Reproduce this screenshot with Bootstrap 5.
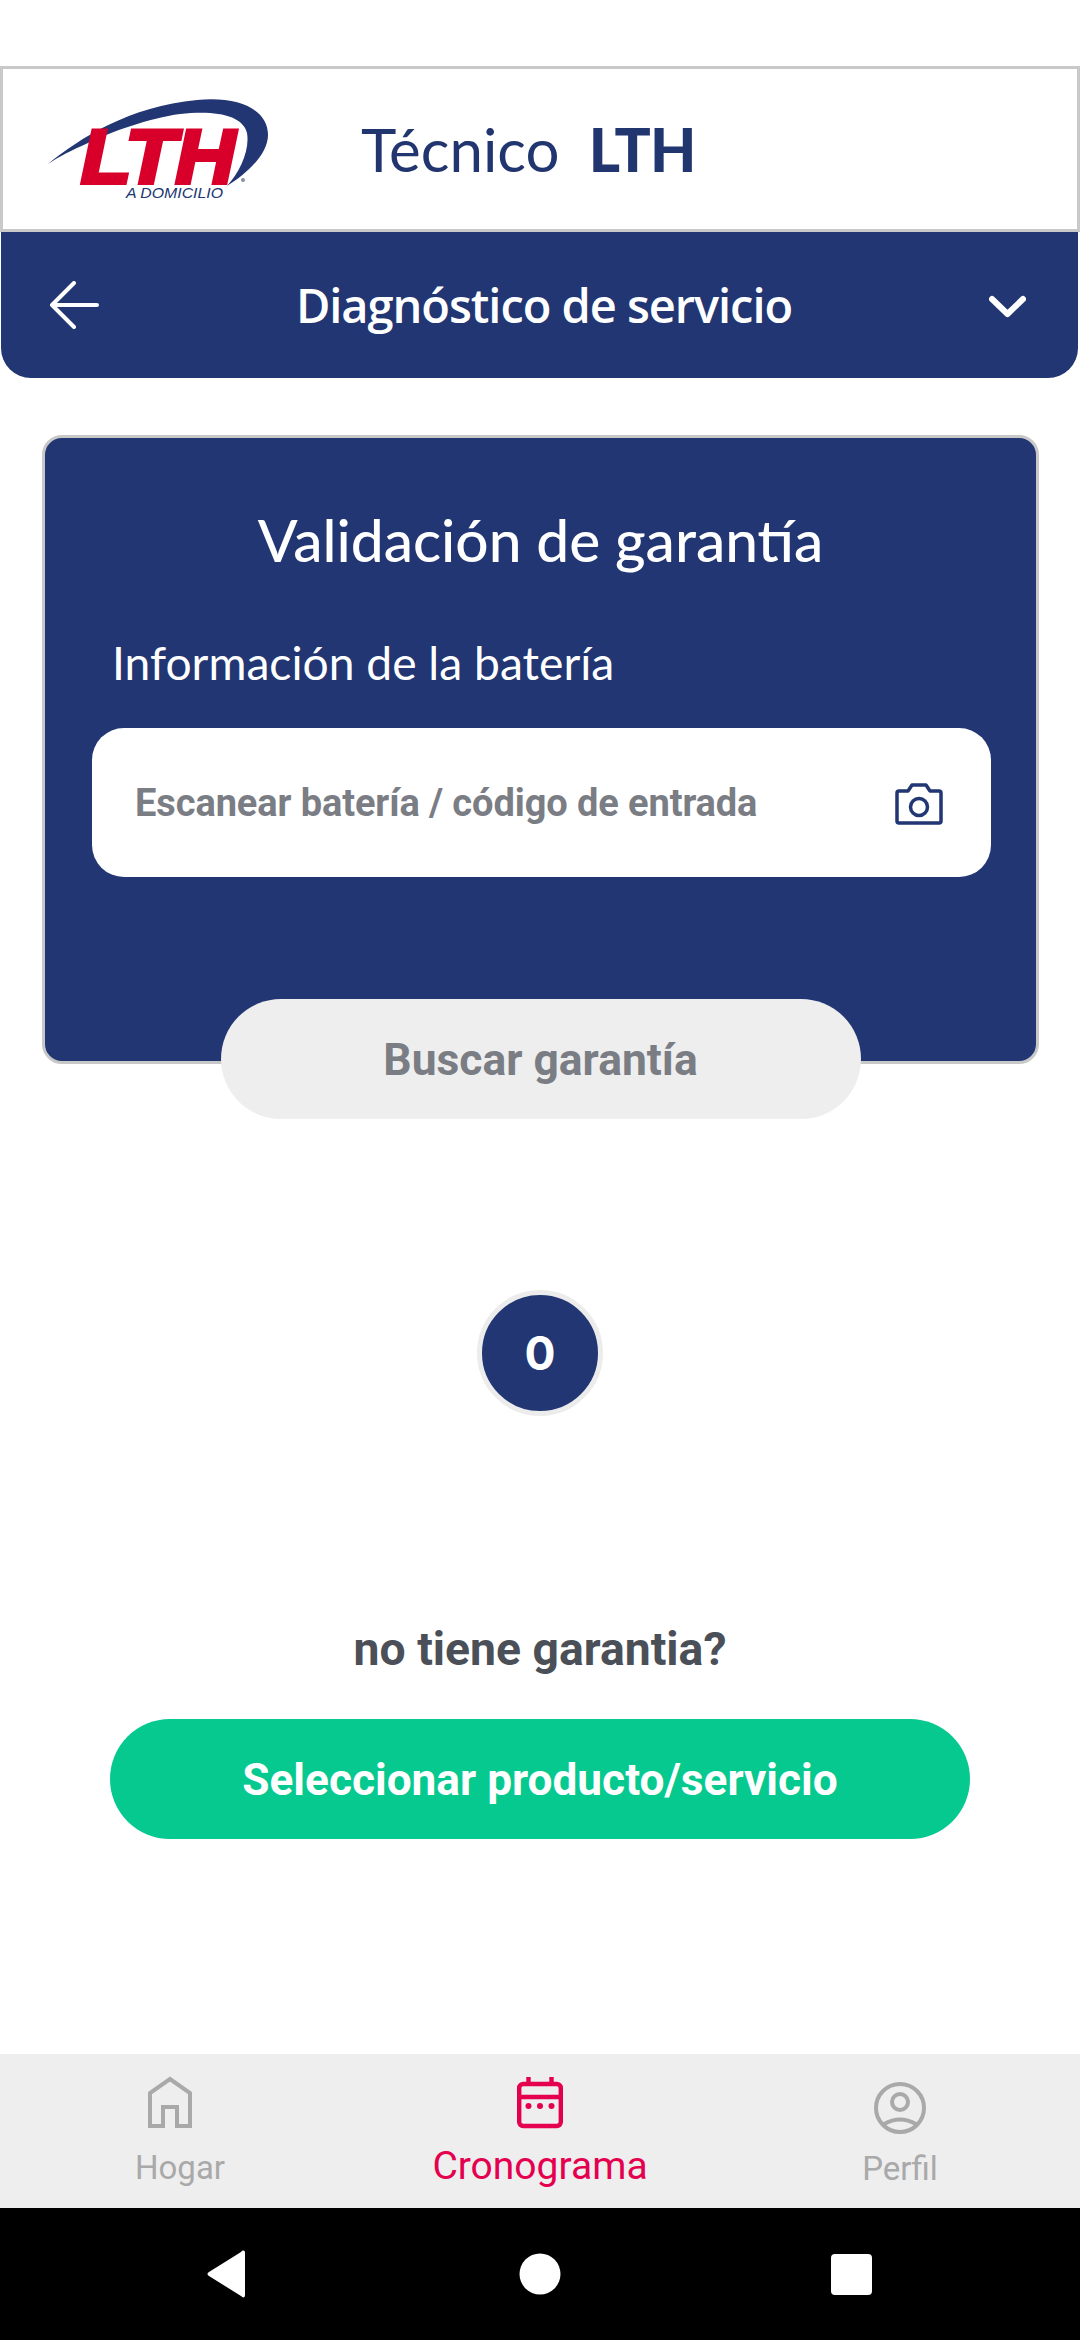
<!DOCTYPE html>
<html lang="es">
<head>
<meta charset="utf-8">
<title>Técnico LTH</title>
<link href="https://cdn.jsdelivr.net/npm/bootstrap@5.3.0/dist/css/bootstrap.min.css" rel="stylesheet">
<style>
html, body { margin: 0; background: #fff; }
.screen { width: 1080px; height: 2340px; font-family: Roboto, "Liberation Sans", sans-serif; }
.status-gap { height: 66px; }
.brand-bar { height: 166px; border: 3px solid #c9c9c9; background: #fff; padding: 0 0 0 37px; }
.brand-logo { width: 240px; height: 115px; display: block; margin-top: -3px; }
.brand-name { margin-left: 81px; font-family: "Lato", sans-serif; font-size: 60px; line-height: 1; color: #21356f; word-spacing: 6px; }
.brand-name b { font-weight: 900; margin-left: 8px; letter-spacing: -.5px; }
.title-bar { height: 146px; background: #213672; border-radius: 0 0 30px 30px; color: #fff; margin: 0 2px 0 1px; padding: 0 48px; }
.title-text { font-family: "Open Sans", sans-serif; font-weight: 600; font-size: 47px; letter-spacing: -1.05px; }
.chevron-icon { margin-top: 3px; }
.panel { margin: 57px 41px 0 42px; height: 629px; background: #213672; border: 3px solid #c8c8c8; border-radius: 20px; color: #fff; }
.panel-title { font-family: "Lato", sans-serif; font-size: 58.6px; font-weight: 500; line-height: 70px; margin: 66px 0 0; text-align: center; }
.panel-label { font-family: "Lato", sans-serif; font-size: 46.2px; font-weight: 400; line-height: 56px; margin: 60px 0 0 67px; }
.scan-box { margin: 38px 45px 0 47px; height: 149px; background: #fff; border-radius: 32px; padding: 2px 47px 0 43px; }
.scan-text { font-size: 38px; font-weight: 700; color: #7a7d84; letter-spacing: -.1px; }
.btn.search-btn { display: block; width: 640px; height: 120px; margin: 122px auto 0; background: #eeeeee; border: 0; border-radius: 60px; color: #7a7d84; font-size: 44.4px; font-weight: 700; padding: 3px 0 0; }
.count-dot { width: 126px; height: 126px; margin: 226px auto 0; background: #213672; border: 5px solid #ececec; border-radius: 50%; color: #fff; font-family: "Inter", sans-serif; font-size: 46px; font-weight: 700; }
.no-warranty { margin: 205px 0 0; text-align: center; font-size: 46.3px; font-weight: 700; color: #4b4f58; line-height: 56px; }
.btn.pick-btn { display: block; width: 860px; height: 120px; margin: 42px auto 0; background: #05c98f; border: 0; border-radius: 60px; color: #fff; font-size: 44.2px; font-weight: 700; padding: 2px 0 0; }
.tab-bar { height: 154px; background: #eeeeee; }
.tab-item { width: 360px; height: 154px; color: #a9a9a9; font-size: 33px; line-height: 40px; text-align: center; text-decoration: none; }
.tab-item svg { display: block; margin: 0 auto; }
.tab-item.active { color: #e4004f; font-size: 39px; }
.home-icon { margin: 22px auto 0 !important; transform: translateX(-10px); }
.cal-icon { margin-top: 23px !important; }
.user-icon { margin-top: 28px !important; }
.tab-label { margin-top: 20px; }
.cal-label { margin-top: 16px; }
.user-label { margin-top: 15px; }
.sys-nav { height: 132px; background: #000; }
</style>
</head>
<body>
<div class="screen d-flex flex-column overflow-hidden">
  <div class="status-gap"></div>

  <header class="brand-bar d-flex align-items-center">
    <svg class="brand-logo" viewBox="40 90 240 115" aria-label="LTH">
      <path fill="#213672" d="M48 164C80 138 130 106 197 100C240 96 268 110 268 135C268 155 245 175 227 186C240 172 250 150 247 133C243 115 215 110 180 114C150 118 110 132 88 143C72 150 58 157 48 164Z"/>
      <text x="81" y="183" font-family="Liberation Sans" font-weight="700" font-style="italic" font-size="76" fill="#d8002b" stroke="#d8002b" stroke-width="4" textLength="154" lengthAdjust="spacingAndGlyphs">LTH</text>
      <text x="126" y="198" font-family="Liberation Sans" font-style="italic" font-size="14" fill="#213672" textLength="97" lengthAdjust="spacingAndGlyphs">A DOMICILIO</text>
      <circle cx="243" cy="180" r="2" fill="#8b8fa0"/>
    </svg>
    <div class="brand-name">Técnico <b>LTH</b></div>
  </header>

  <div class="title-bar d-flex align-items-center justify-content-between">
    <svg width="50" height="48" viewBox="0 0 50 48" fill="none" stroke="#fff" stroke-width="4" stroke-linecap="round" stroke-linejoin="round"><path d="M25 2L3 24L25 46M3 24H48"/></svg>
    <div class="title-text">Diagnóstico de servicio</div>
    <svg class="me-1 chevron-icon" width="37" height="24" viewBox="0 0 37 24" fill="none" stroke="#fff" stroke-width="6" stroke-linecap="round" stroke-linejoin="round"><path d="M3 4L18.5 19L34 4"/></svg>
  </div>

  <main class="flex-grow-1">
    <section class="panel">
      <h2 class="panel-title">Validación de garantía</h2>
      <div class="panel-label">Información de la batería</div>
      <div class="scan-box d-flex align-items-center justify-content-between">
        <span class="scan-text">Escanear batería / código de entrada</span>
        <svg width="50" height="44" viewBox="0 0 50 44" fill="none" stroke="#213672" stroke-width="3.5" stroke-linejoin="round"><path d="M5 9H14L18 3H32L36 9H45Q47 9 47 11V39Q47 41 45 41H5Q3 41 3 39V11Q3 9 5 9Z"/><circle cx="25" cy="25" r="8.5"/></svg>
      </div>
      <button type="button" class="btn search-btn">Buscar garantía</button>
    </section>

    <div class="count-dot d-flex align-items-center justify-content-center">0</div>
    <p class="no-warranty">no tiene garantia?</p>
    <button type="button" class="btn pick-btn">Seleccionar producto/servicio</button>
  </main>

  <nav class="tab-bar d-flex">
    <a class="tab-item" href="#">
      <svg class="home-icon" width="48" height="52" viewBox="0 0 48 52" fill="none" stroke="#a9a9a9" stroke-width="4"><path d="M4 50V17L24 3L44 17V50H31V31H17V50Z"/></svg>
      <div class="tab-label">Hogar</div>
    </a>
    <a class="tab-item active" href="#">
      <svg class="cal-icon" width="46" height="53" viewBox="0 0 46 53" fill="none" stroke="#e4004f" stroke-width="4.4"><rect x="2.2" y="7" width="41.6" height="42" rx="4"/><path d="M2 20H44M11.5 0V7M34.5 0V7"/><g fill="#e4004f" stroke="none"><circle cx="11.5" cy="29" r="3"/><circle cx="23" cy="29" r="3"/><circle cx="34.5" cy="29" r="3"/></g></svg>
      <div class="cal-label">Cronograma</div>
    </a>
    <a class="tab-item" href="#">
      <svg class="user-icon" width="52" height="52" viewBox="0 0 52 52" fill="none" stroke="#a9a9a9" stroke-width="4"><circle cx="26" cy="26" r="24"/><circle cx="26" cy="20" r="8"/><path d="M10 42Q26 33 42 42"/></svg>
      <div class="user-label">Perfil</div>
    </a>
  </nav>

  <div class="sys-nav d-flex align-items-center justify-content-center">
    <svg width="1080" height="132" viewBox="0 0 1080 132" fill="#fff">
      <path d="M245 45V87C245 90 243 90 241 88L209 68C207 67 207 65 209 64L241 44C243 42 245 42 245 45Z"/>
      <circle cx="540" cy="66" r="20.5"/>
      <rect x="831" y="46" width="41" height="41" rx="4"/>
    </svg>
  </div>
</div>
<script src="https://cdn.jsdelivr.net/npm/bootstrap@5.3.0/dist/js/bootstrap.bundle.min.js"></script>
</body>
</html>
